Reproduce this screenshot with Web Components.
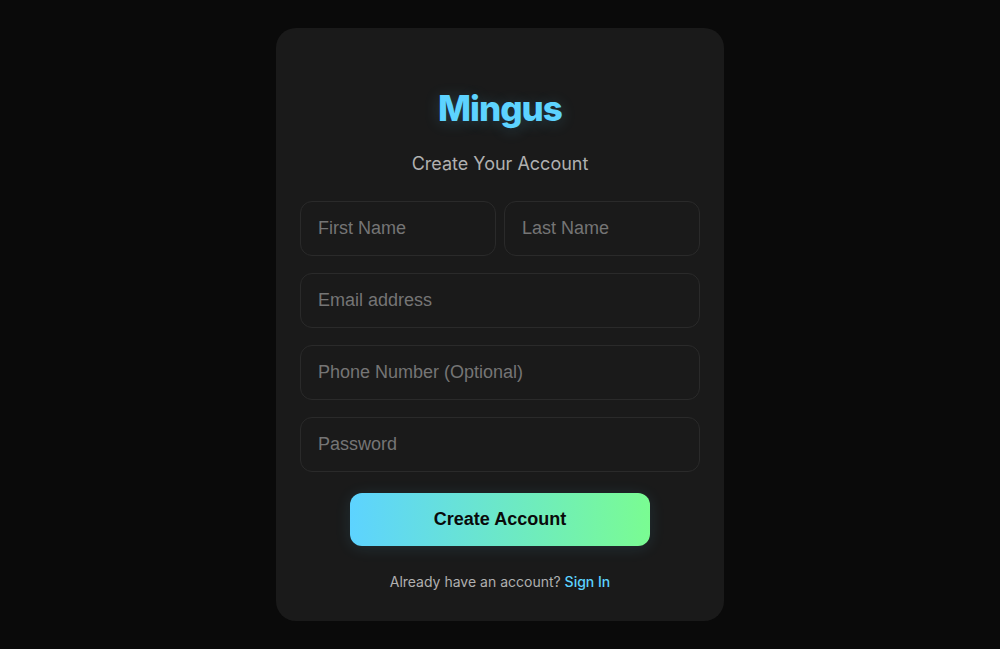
<!DOCTYPE html>
<html lang="en">
<head>
<meta charset="utf-8">
<meta name="viewport" content="width=device-width, initial-scale=1">
<title>Mingus – Create Your Account</title>
<style>
body { margin: 0; background: #0a0a0a; color: #b0b0b0; font-family: Inter, sans-serif; }
</style>
</head>
<body>
<signup-page></signup-page>
<script>
class TextField extends HTMLElement {
  connectedCallback() {
    const label = this.getAttribute('label');
    const root = this.attachShadow({ mode: 'open' });
    root.innerHTML = `
      <style>
        :host { display: block; min-width: 0; }
        input {
          display: block; box-sizing: border-box; width: 100%;
          padding: 16px 17px; border: 1px solid #2a2a2a; border-radius: 12px;
          background: #1a1a1a; color: #fff; outline: none;
          font: 18px/21px "Liberation Sans", Arial, sans-serif;
        }
        input::placeholder { color: #757575; opacity: 1; }
        input:focus { border-color: #5dd3ff; }
      </style>
      <input>`;
    const input = root.querySelector('input');
    input.type = this.getAttribute('type') || 'text';
    input.placeholder = label;
    input.setAttribute('aria-label', label);
  }
}
customElements.define('text-field', TextField);

class GradientButton extends HTMLElement {
  constructor() {
    super();
    this.attachShadow({ mode: 'open' }).innerHTML = `
      <style>
        :host { display: block; }
        button {
          display: block; width: 100%; padding: 16px; border: 0; border-radius: 12px;
          background: linear-gradient(90deg, #5dd3ff, #7afc92); color: #0a0a0a;
          box-shadow: 0 2px 16px rgba(93, 211, 255, .12);
          font: bold 18px/21px "Liberation Sans", Arial, sans-serif; cursor: pointer;
        }
      </style>
      <button type="button"><slot></slot></button>`;
  }
}
customElements.define('gradient-button', GradientButton);

class SignupCard extends HTMLElement {
  constructor() {
    super();
    this.attachShadow({ mode: 'open' }).innerHTML = `
      <style>
        :host {
          display: block; box-sizing: border-box; width: 100%; max-width: 448px;
          padding: 56px 24px 27px; border-radius: 20px; background: #1a1a1a;
          text-align: center;
        }
        h1 {
          margin: 0 0 18px; color: #5dd3ff; font-size: 35px; line-height: 48px;
          font-weight: 800; letter-spacing: -1px;
          text-shadow: 0 2px 16px rgba(93, 211, 255, .2);
        }
        p { margin: 0; }
        .subtitle { margin-bottom: 23px; font-size: 18px; line-height: 28px; }
        form { display: grid; gap: 17px; }
        .names { display: grid; grid-template-columns: 1fr 1fr; gap: 8px; }
        gradient-button { width: 75%; margin: 4px auto 0; }
        .signin { margin-top: 24px; font-size: 14px; line-height: 24px; }
        a { color: #5dd3ff; text-decoration: none; font-weight: 500; }
      </style>
      <h1>Mingus</h1>
      <p class="subtitle">Create Your Account</p>
      <form>
        <div class="names">
          <text-field label="First Name"></text-field>
          <text-field label="Last Name"></text-field>
        </div>
        <text-field label="Email address" type="email"></text-field>
        <text-field label="Phone Number (Optional)" type="tel"></text-field>
        <text-field label="Password" type="password"></text-field>
        <gradient-button>Create Account</gradient-button>
      </form>
      <p class="signin">Already have an account? <a href="#signin">Sign In</a></p>`;
  }
}
customElements.define('signup-card', SignupCard);

class SignupPage extends HTMLElement {
  constructor() {
    super();
    this.attachShadow({ mode: 'open' }).innerHTML = `
      <style>
        :host {
          display: flex; align-items: center; justify-content: center;
          box-sizing: border-box; min-height: 100vh; padding: 24px;
        }
      </style>
      <signup-card></signup-card>`;
  }
}
customElements.define('signup-page', SignupPage);
</script>
</body>
</html>
